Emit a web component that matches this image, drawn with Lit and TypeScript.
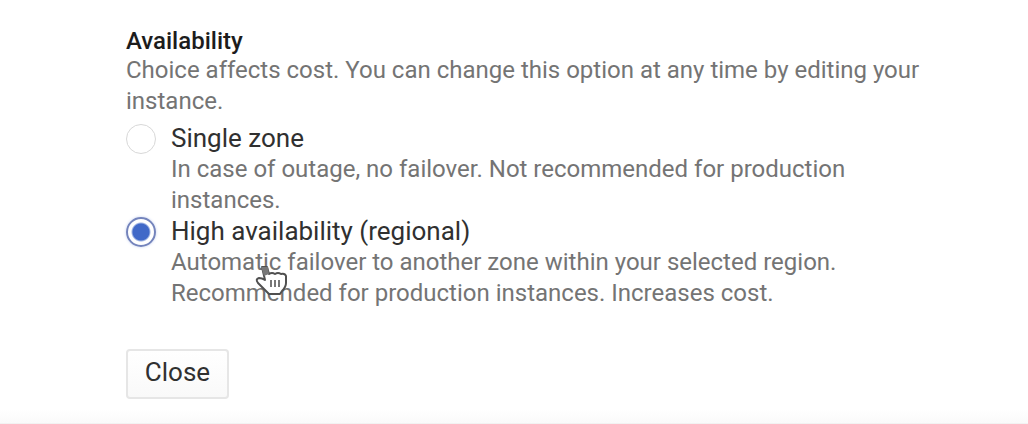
import { LitElement, html, css } from "lit";

class AppRoot extends LitElement {
  static styles = css`
    :host { display: block; font-family: Roboto, sans-serif; color: #747474; background: #fff; }
    * { box-sizing: border-box; }
    .panel { padding: 28px 70px 24px 126px; background: linear-gradient(to top, #fafafa, #fff 14px); border-bottom: 1px solid #f2f2f2; }
    .group { border: 0; margin: 0; padding: 0; min-width: 0; }
    .title { padding: 0; font-size: 24px; line-height: 27px; font-weight: 500; color: #1c1c1c; }
    .text { margin: 0; font-size: 24px; line-height: 31px; }
    .intro { margin-bottom: 6px; }
    .option { display: grid; grid-template-columns: 30px 1fr; column-gap: 15px; }
    .radio { appearance: none; width: 30px; height: 30px; margin: 1px 0 0; border: 1px solid #d8d8d8; border-radius: 50%; background: #fff; }
    .radio:checked { border: 2px solid #7484bc; background: radial-gradient(circle, #4169c8 8px, #fff 10px); box-shadow: 0 0 3px #c5d2f2; }
    .name { font-size: 26px; line-height: 31px; color: #303030; }
    .hint { grid-column: 2; }
    .spot { position: relative; }
    .cursor { position: absolute; left: 84px; top: 17px; width: 34px; height: 34px; pointer-events: none; }
    .close { display: block; margin-top: 40px; width: 103px; height: 50px; border: 2px solid #e6e6e6; border-radius: 4px; background: linear-gradient(#fff, #f9f9f9); font: 400 26px/30px Roboto, sans-serif; color: #303030; padding: 0 0 4px; }
  `;
  render() {
    return html`<main class="panel">
      <fieldset class="group">
        <legend class="title">Availability</legend>
        <p class="text intro">Choice affects cost. You can change this option at any time by editing your instance.</p>
        <div class="option">
          <input class="radio" type="radio" name="zone" id="single" aria-describedby="single-hint" />
          <label class="name" for="single">Single zone</label>
          <p class="text hint" id="single-hint">In case of outage, no failover. Not recommended for production instances.</p>
        </div>
        <div class="option">
          <input class="radio" type="radio" name="zone" id="regional" aria-describedby="regional-hint" checked />
          <label class="name" for="regional">High availability (regional)</label>
          <div class="hint spot">
            <p class="text" id="regional-hint">Automatic failover to another zone within your selected region. Recommended for production instances. Increases cost.</p>
            <svg class="cursor" viewBox="0 0 34 34" aria-hidden="true">
              <path d="M7 3H12L14 10Q17 8 20 10Q23 8 26 10Q30 9 31 12V19Q31 23 27 27L25 30H14L10 26L3 19Q0 15 4 14Q7 14 10 16Z" fill="#fff" stroke="#505050" stroke-width="2" stroke-linejoin="round"/>
              <path d="M6 3H13L14 10L9 12Z" fill="#777"/>
              <path d="M16 16V23M20 16V23M24 16V23" stroke="#777" stroke-width="2" fill="none"/>
            </svg>
          </div>
        </div>
      </fieldset>
      <button class="close" type="button">Close</button>
    </main>`;
  }
}
customElements.define("app-root", AppRoot);
